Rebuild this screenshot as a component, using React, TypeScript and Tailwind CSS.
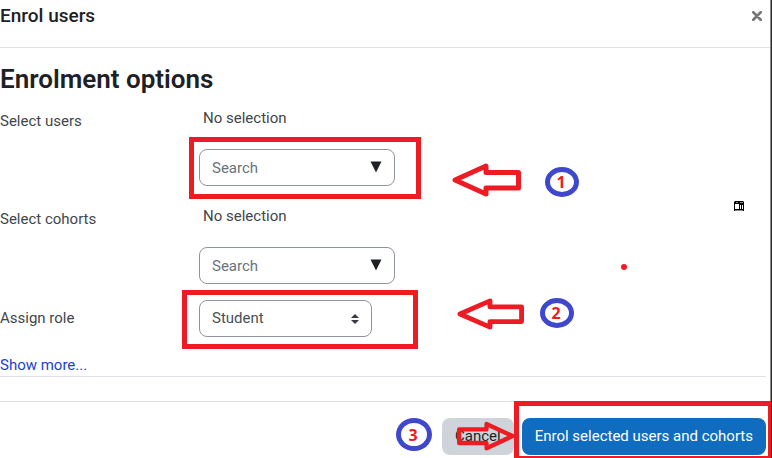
import { useState } from "react";
import type { ReactNode } from "react";

function Arrow({ className, flip = false }: { className: string; flip?: boolean }) {
  return (
    <svg
      viewBox="0 0 70 34"
      preserveAspectRatio="none"
      fill="none"
      stroke="#ed1c24"
      strokeWidth="5"
      strokeLinejoin="round"
      className={"pointer-events-none shrink-0 " + className}
      aria-hidden="true"
    >
      <path
        d={
          flip
            ? "M66 17 L35 3.500 V9.500 H2.500 V25 H35 V31 Z"
            : "M4 17 L35 3 V9.500 H67.500 V25 H35 V31 Z"
        }
      />
    </svg>
  );
}

function StepBadge({ n, className }: { n: number; className: string }) {
  return (
    <span
      className={
        "flex shrink-0 items-center justify-center rounded-[50%] border-5 border-[#3f48cc] pr-0.5 font-['Open_Sans',sans-serif] text-[16px] leading-none font-bold text-[#ed1c24] " +
        className
      }
    >
      {n}
    </span>
  );
}

function SearchBox({ id }: { id: string }) {
  const [value, setValue] = useState("");
  return (
    <div className="relative w-[196px] shrink-0">
      <input
        id={id}
        type="text"
        value={value}
        onChange={(e) => setValue(e.target.value)}
        placeholder="Search"
        className="block h-[37px] w-full rounded-lg border border-[#8f959e] bg-white pr-9 pl-3 text-[15px] text-[#495057] outline-none placeholder:text-[#6a737b]"
      />
      <svg
        viewBox="0 0 12 12"
        className="pointer-events-none absolute top-3 right-[13px] h-3 w-3"
        fill="#1d2125"
        aria-hidden="true"
      >
        <path d="M0.500 0.500 H11.500 L6 11.500 Z" />
      </svg>
    </div>
  );
}

function PickerRow({ id, label, step, children }: { id: string; label: string; step?: ReactNode; children?: ReactNode }) {
  return (
    <div className="relative flex">
      <label htmlFor={id} className="w-[199px] shrink-0 pt-[5px] leading-6">
        {label}
      </label>
      <div className="pt-0.5">
        <p className="pl-1 leading-6">No selection</p>
        <div className="mt-[19px] flex h-[37px] items-start">
          <SearchBox id={id} />
          {step}
        </div>
      </div>
      {children}
    </div>
  );
}

export default function App() {
  const [role, setRole] = useState("Student");

  return (
    <div className="min-h-screen overflow-hidden border-r border-[#2b2b2b] bg-white font-['Roboto',sans-serif] text-[15px] text-[#41464b]">
      <div className="min-h-screen border-r border-[#8a8a8a]">
        <header className="flex items-center justify-between border-b border-[#dee2e6] pt-1 pr-2 pb-[19px]">
          <h1 className="text-[19px] leading-6 font-medium text-[#1d2125]">Enrol users</h1>
          <button type="button" aria-label="Close" className="text-[#777]">
            <svg viewBox="0 0 10 10" className="h-[10px] w-[10px]" stroke="currentColor" strokeWidth="2.700" strokeLinecap="round">
              <path d="M1.300 1.300 L8.700 8.700 M8.700 1.300 L1.300 8.700" />
            </svg>
          </button>
        </header>

        <main className="pt-[15px] pr-1">
          <h2 className="mb-[9px] text-[26px] leading-8 font-semibold text-[#1d2125]">Enrolment options</h2>

          <div className="flex flex-col gap-4">
            <PickerRow
              id="users"
              label="Select users"
              step={
                <>
                  <Arrow className="mt-[14px] ml-14 h-[34px] w-[70px]" />
                  <StepBadge n={1} className="mt-[18px] ml-6 h-[30px] w-[34px]" />
                </>
              }
            >
              <span className="pointer-events-none absolute top-[33px] left-[189px] h-[62px] w-[232px] border-5 border-[#ed1c24]" />
            </PickerRow>

            <PickerRow id="cohorts" label="Select cohorts">
              <svg viewBox="0 0 10 10" className="absolute -top-px left-[734px] h-[10px] w-[10px]" aria-hidden="true">
                <path d="M0 0 H10 V10 H0 Z" fill="#000" />
                <path d="M0 0 H1 V1 H0 Z M2 1 H4 V2 H2 Z M6 1 H9 V2 H6 Z M1 9 H9 V10 H1 Z M9 0 H10 V1 H9 Z" fill="#888" />
                <path d="M1 3 H5 V8 H1 Z M6 4 H7 V8 H6 Z M8 4 H9 V8 H8 Z" fill="#fff" />
              </svg>
              <span className="absolute top-[62px] left-[621px] h-[6px] w-[6px] rounded-full bg-[#ed1c24]" />
            </PickerRow>

            <div className="relative flex items-start">
              <label htmlFor="role" className="w-[199px] shrink-0 leading-[37px]">
                Assign role
              </label>
              <div className="relative w-[173px] shrink-0">
                <select
                  id="role"
                  value={role}
                  onChange={(e) => setRole(e.target.value)}
                  className="block h-[37px] w-full appearance-none rounded-lg border border-[#8f959e] bg-white pr-8 pl-3 text-[15px] text-[#495057] outline-none"
                >
                  <option>Student</option>
                  <option>Teacher</option>
                  <option>Manager</option>
                </select>
                <svg
                  viewBox="0 0 8 10"
                  className="pointer-events-none absolute top-[14px] right-[13px] h-[10px] w-2"
                  fill="#343a40"
                  aria-hidden="true"
                >
                  <path d="M4 0 L8 4 H0 Z M4 10 L0 6 H8 Z" />
                </svg>
              </div>
              <Arrow className="-mt-0.5 ml-[84px] h-8 w-[68px]" />
              <StepBadge n={2} className="-mt-0.5 ml-4 h-[30px] w-[34px]" />
              <span className="pointer-events-none absolute -top-[10px] left-[182px] h-[59px] w-[236px] border-5 border-[#ed1c24]" />
            </div>
          </div>

          <div className="mt-[18px] border-b border-[#dee2e6]">
            <a href="#more" className="block w-max leading-[21px] text-[#1d3fd0]">
              Show more...
            </a>
          </div>
        </main>

        <footer className="mt-6 flex items-start justify-end gap-2 border-t border-[#dee2e6] pt-4 pr-1">
          <StepBadge n={3} className="mr-0.5 h-[33px] w-[36px]" />
          <div className="relative">
            <button type="button" className="h-[37px] rounded-lg bg-[#ced4da] px-[13px] text-[#1d2125]">
              Cancel
            </button>
            <Arrow flip className="absolute top-[3px] left-[15px] h-[30px] w-[59px]" />
          </div>
          <div className="relative">
            <button type="button" className="h-[37px] rounded-lg bg-[#0f6cbf] px-[13px] text-white">
              Enrol selected users and cohorts
            </button>
            <span className="pointer-events-none absolute -top-[17px] -right-[5px] -left-2 h-[57px] border-5 border-r-3 border-b-2 border-[#ed1c24]" />
          </div>
        </footer>
      </div>
    </div>
  );
}
